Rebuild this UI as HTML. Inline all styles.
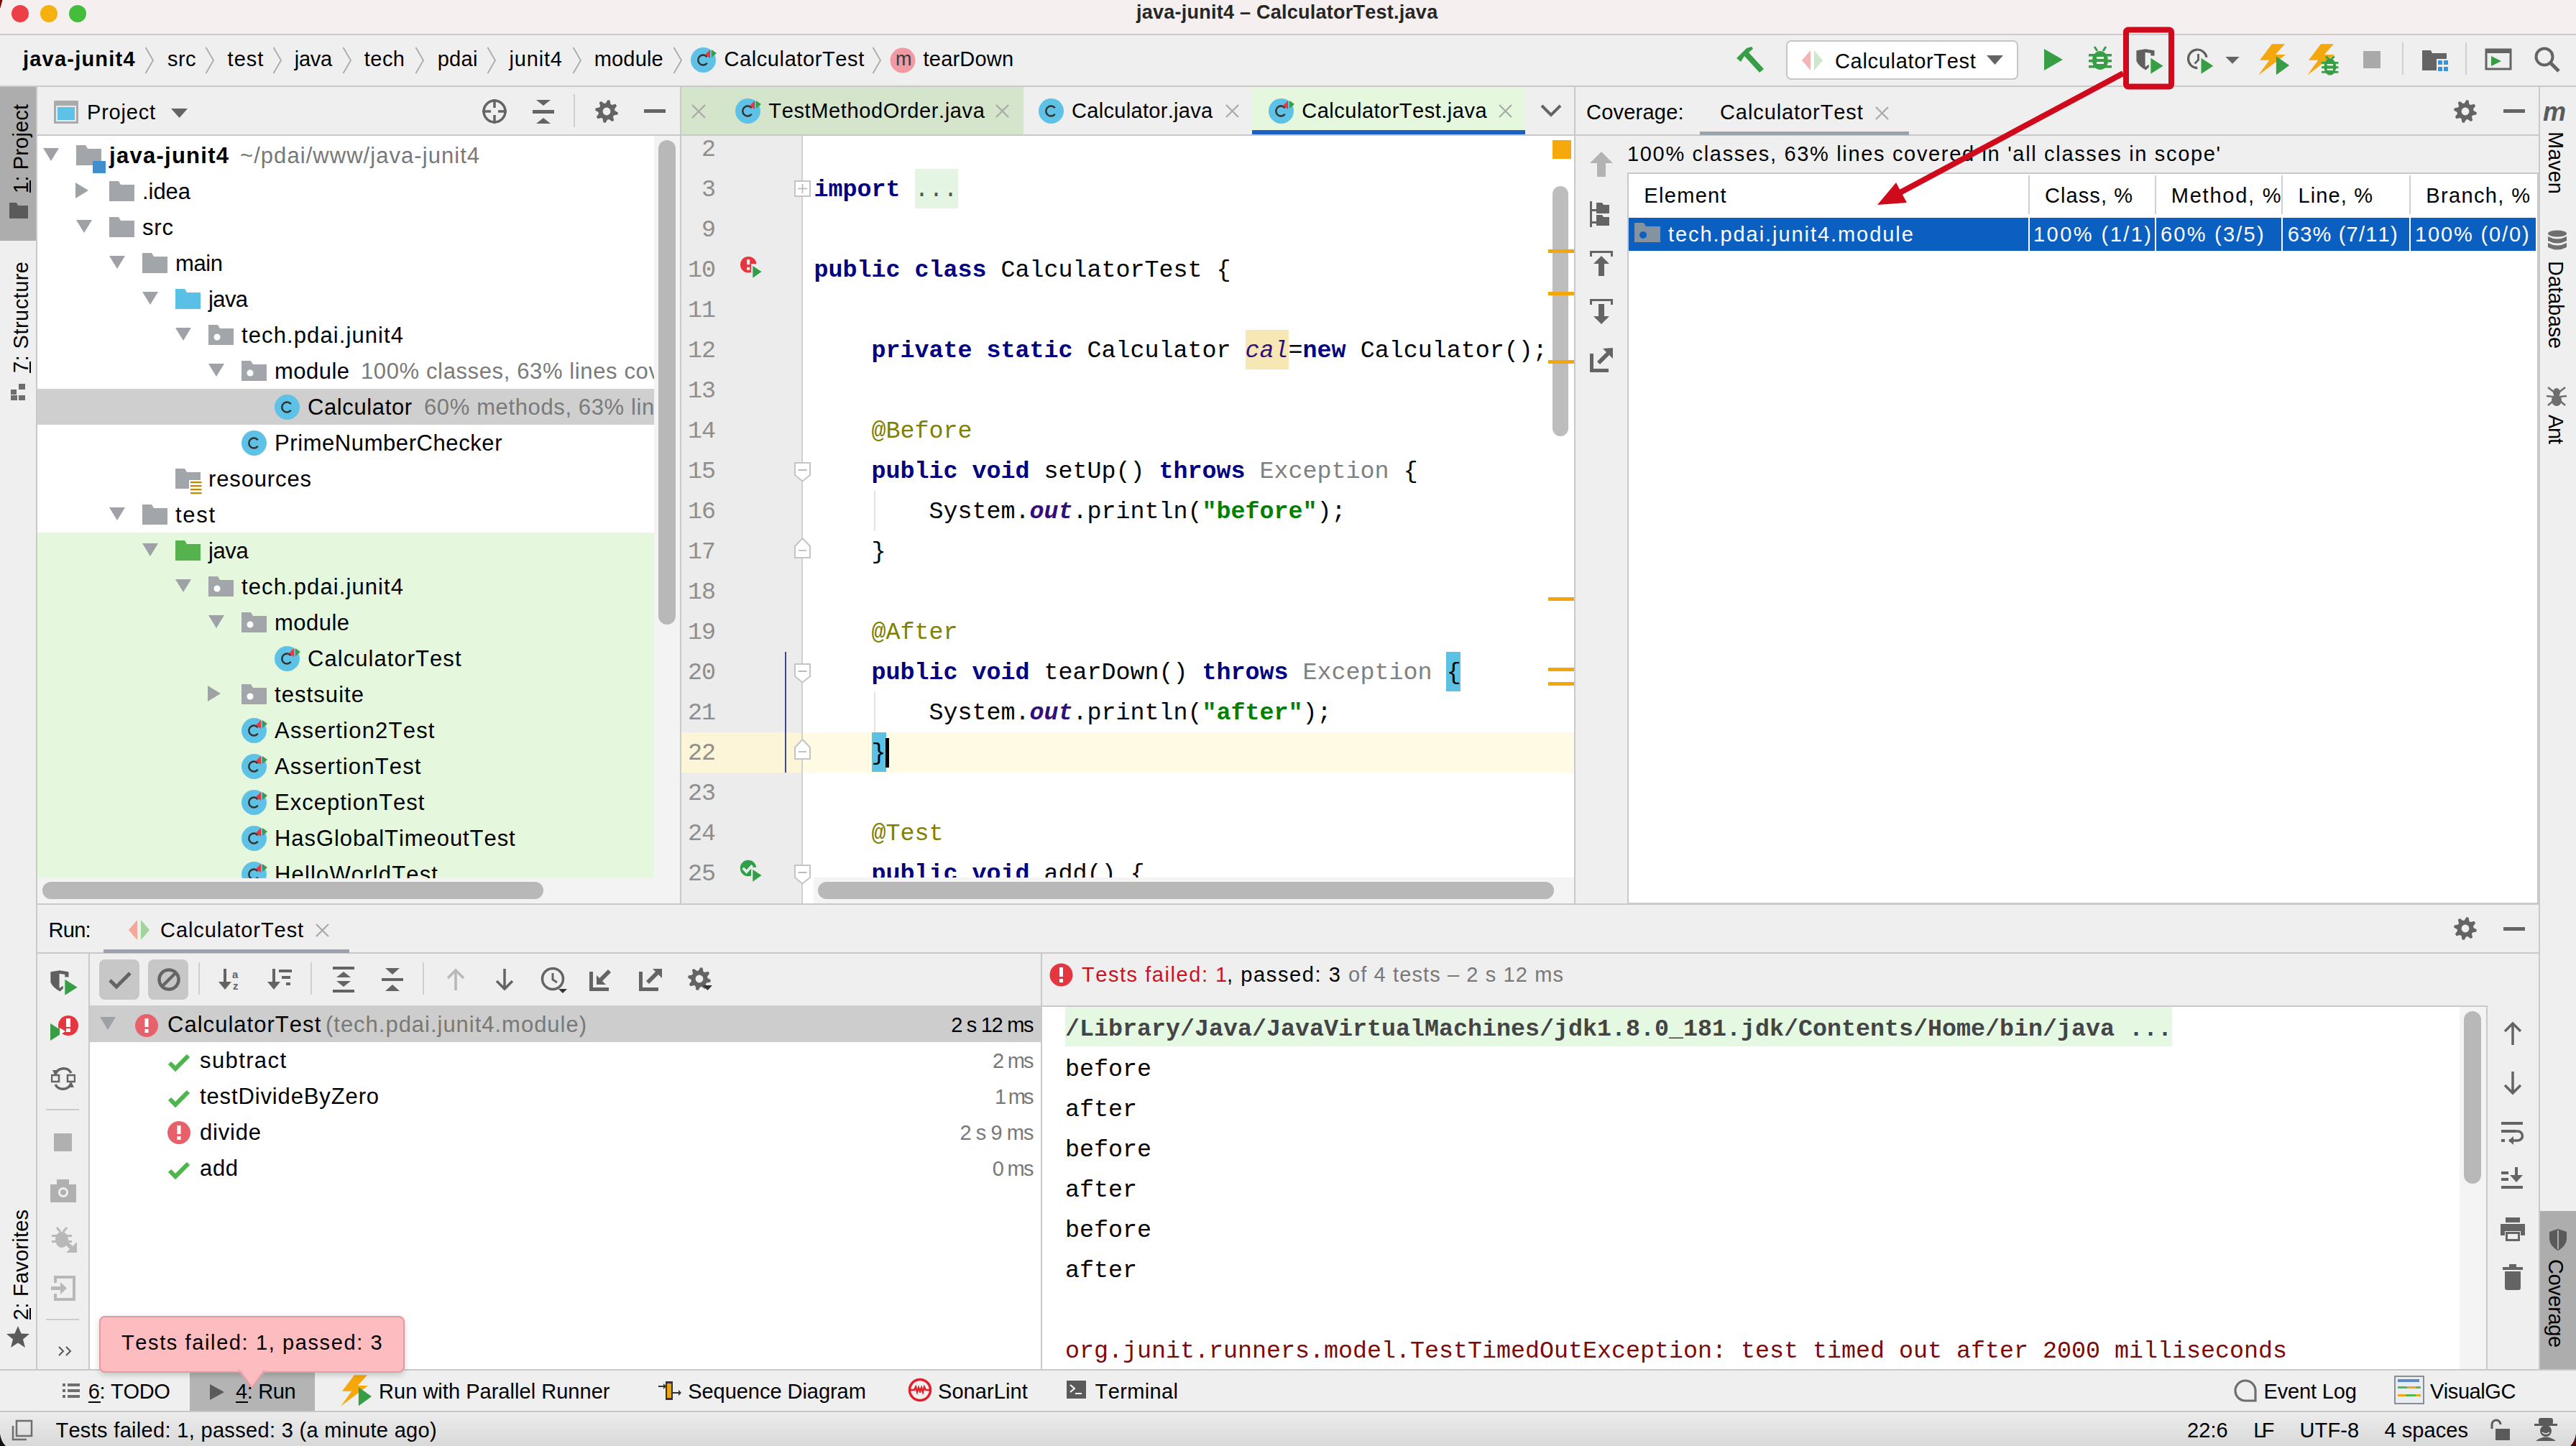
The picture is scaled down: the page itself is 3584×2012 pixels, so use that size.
<!DOCTYPE html>
<html><head><meta charset="utf-8"><title>java-junit4 – CalculatorTest.java</title>
<style>
html,body{margin:0;padding:0;}
body{width:3584px;height:2012px;position:relative;overflow:hidden;background:#efefef;}
body>div, body>svg{position:absolute;}
.t{white-space:pre;font-kerning:none;}
</style></head><body>
<div style="left:0px;top:0px;width:3584px;height:48px;background:#f5efef;"></div>
<div style="left:0px;top:47px;width:3584px;height:2px;background:#cfcaca;"></div>
<svg style="left:0px;top:0px" width="140" height="40" viewBox="0 0 140 40"><circle cx="28" cy="19" r="12" fill="#ec3f47"/><circle cx="68" cy="19" r="12" fill="#f6b00f"/><circle cx="108" cy="19" r="12" fill="#43bd3c"/></svg>
<div class="t" style="top:4.1px;font-family:'Liberation Sans', sans-serif;font-size:27px;line-height:27px;color:#262626;letter-spacing:0.25px;font-weight:700;left:1581px;">java-junit4 – CalculatorTest.java</div>
<div style="left:0px;top:49px;width:3584px;height:70px;background:#efefef;"></div>
<div style="left:0px;top:119px;width:3584px;height:2px;background:#c9c9c9;"></div>
<div class="t" style="top:68.4px;font-family:'Liberation Sans', sans-serif;font-size:29px;line-height:29px;color:#000;letter-spacing:1.21px;font-weight:700;left:32px;">java-junit4</div>
<svg style="left:201px;top:64px" width="14" height="40" viewBox="0 0 14 40"><polyline points="1.5,2 12,20 1.5,38" fill="none" stroke="#a9a9a9" stroke-width="1.8"/></svg>
<div class="t" style="top:68.4px;font-family:'Liberation Sans', sans-serif;font-size:29px;line-height:29px;color:#000;letter-spacing:0.47px;left:233px;">src</div>
<svg style="left:285px;top:64px" width="14" height="40" viewBox="0 0 14 40"><polyline points="1.5,2 12,20 1.5,38" fill="none" stroke="#a9a9a9" stroke-width="1.8"/></svg>
<div class="t" style="top:68.4px;font-family:'Liberation Sans', sans-serif;font-size:29px;line-height:29px;color:#000;letter-spacing:0.98px;left:316.6px;">test</div>
<svg style="left:379px;top:64px" width="14" height="40" viewBox="0 0 14 40"><polyline points="1.5,2 12,20 1.5,38" fill="none" stroke="#a9a9a9" stroke-width="1.8"/></svg>
<div class="t" style="top:68.4px;font-family:'Liberation Sans', sans-serif;font-size:29px;line-height:29px;color:#000;letter-spacing:-0.33px;left:409.8px;">java</div>
<svg style="left:476px;top:64px" width="14" height="40" viewBox="0 0 14 40"><polyline points="1.5,2 12,20 1.5,38" fill="none" stroke="#a9a9a9" stroke-width="1.8"/></svg>
<div class="t" style="top:68.4px;font-family:'Liberation Sans', sans-serif;font-size:29px;line-height:29px;color:#000;letter-spacing:0.46px;left:506.8px;">tech</div>
<svg style="left:577px;top:64px" width="14" height="40" viewBox="0 0 14 40"><polyline points="1.5,2 12,20 1.5,38" fill="none" stroke="#a9a9a9" stroke-width="1.8"/></svg>
<div class="t" style="top:68.4px;font-family:'Liberation Sans', sans-serif;font-size:29px;line-height:29px;color:#000;letter-spacing:0.30px;left:608.7px;">pdai</div>
<svg style="left:677px;top:64px" width="14" height="40" viewBox="0 0 14 40"><polyline points="1.5,2 12,20 1.5,38" fill="none" stroke="#a9a9a9" stroke-width="1.8"/></svg>
<div class="t" style="top:68.4px;font-family:'Liberation Sans', sans-serif;font-size:29px;line-height:29px;color:#000;letter-spacing:0.82px;left:708.5px;">junit4</div>
<svg style="left:796px;top:64px" width="14" height="40" viewBox="0 0 14 40"><polyline points="1.5,2 12,20 1.5,38" fill="none" stroke="#a9a9a9" stroke-width="1.8"/></svg>
<div class="t" style="top:68.4px;font-family:'Liberation Sans', sans-serif;font-size:29px;line-height:29px;color:#000;letter-spacing:0.18px;left:826.7px;">module</div>
<svg style="left:936px;top:64px" width="14" height="40" viewBox="0 0 14 40"><polyline points="1.5,2 12,20 1.5,38" fill="none" stroke="#a9a9a9" stroke-width="1.8"/></svg>
<svg style="left:960.7px;top:66px" width="38" height="36" viewBox="0 0 38 36"><circle cx="17.5" cy="17.5" r="17.5" fill="#5ec2e6"/><path d="M22.8,13.2 A7.0,7.0 0 1 0 22.8,21.8" fill="none" stroke="#333" stroke-width="2.5"/><polygon points="20.0,10.0 27.0,3.0 27.0,15.0" fill="#e8383d"/><polygon points="29.0,3.0 36.0,8.0 29.0,14.0" fill="#3b9c48"/></svg>
<div class="t" style="top:68.4px;font-family:'Liberation Sans', sans-serif;font-size:29px;line-height:29px;color:#000;letter-spacing:0.61px;left:1007.4px;">CalculatorTest</div>
<svg style="left:1213px;top:64px" width="14" height="40" viewBox="0 0 14 40"><polyline points="1.5,2 12,20 1.5,38" fill="none" stroke="#a9a9a9" stroke-width="1.8"/></svg>
<svg style="left:1238px;top:66px" width="36" height="36" viewBox="0 0 36 36"><circle cx="18" cy="18" r="17.5" fill="#f19aa3"/></svg>
<div class="t" style="top:69.1px;font-family:'Liberation Sans', sans-serif;font-size:27px;line-height:27px;color:#3a3a3a;letter-spacing:0.00px;left:1246px;">m</div>
<div class="t" style="top:68.4px;font-family:'Liberation Sans', sans-serif;font-size:29px;line-height:29px;color:#000;letter-spacing:0.19px;left:1284.6px;">tearDown</div>
<svg style="left:2413px;top:63px" width="44" height="40" viewBox="0 0 44 40"><g fill="#389e46"><polygon points="3,18 17,4 24,2 26,5 20,10 41,33 35,38 14,15 9,23"/></g></svg>
<div style="left:2485px;top:56px;width:319px;height:51px;background:#fff;border:2px solid #c6c6c6;border-radius:7px;box-sizing:content-box"></div>
<svg style="left:2505px;top:68px" width="34" height="32" viewBox="0 0 34 32"><polygon points="14,2 14,30 2,16" fill="#f5b5b5"/><polygon points="19,2 19,30 31,16" fill="#cfe6cc"/></svg>
<div class="t" style="top:70.9px;font-family:'Liberation Sans', sans-serif;font-size:29px;line-height:29px;color:#000;letter-spacing:0.68px;left:2553px;">CalculatorTest</div>
<svg style="left:2764px;top:77px" width="24" height="14" viewBox="0 0 24 14"><polygon points="0,0 23,0 11.5,13" fill="#646464"/></svg>
<svg style="left:2843px;top:68px" width="28" height="31" viewBox="0 0 28 31"><polygon points="1,0 27,15 1,30" fill="#389e46"/></svg>
<svg style="left:2905px;top:64px" width="34" height="35" viewBox="0 0 34 35"><g fill="#389e46"><ellipse cx="17" cy="20" rx="11" ry="13"/><rect x="1" y="11" width="32" height="3.5"/><rect x="1" y="19" width="32" height="3.5"/><rect x="1" y="27" width="32" height="3.5"/><line x1="9" y1="1" x2="13" y2="7" stroke="#389e46" stroke-width="3"/><line x1="25" y1="1" x2="21" y2="7" stroke="#389e46" stroke-width="3"/></g><rect x="12" y="15" width="10" height="3" fill="#efefef"/><rect x="12" y="22" width="10" height="3" fill="#efefef"/></svg>
<svg style="left:2970px;top:66px" width="42" height="40" viewBox="0 0 42 40"><g transform="scale(1.0)"><path d="M2.4,4.3 L15,2.2 L27.5,4.3 L27.5,11.6 L22.3,11.6 L22.3,8 L16,7 L16,26 L19.8,23.8 L19.8,27.5 L15.5,31.5 Q6,26.5 2.4,19 Z" fill="#5f5f5f"/><rect x="14.6" y="7" width="1.6" height="19.5" fill="#efefef"/><polygon points="22.3,14.7 39.6,25.7 22.3,36.8" fill="#389e46"/></g></svg>
<svg style="left:3040px;top:64px" width="80" height="42" viewBox="0 0 80 42"><path d="M17.3,30.6 A12.8,12.8 0 1 1 30.0,15.8" fill="none" stroke="#5f5f5f" stroke-width="3.2"/><path d="M18.5,11 L18.5,19.5 L13.5,24.5" fill="none" stroke="#5f5f5f" stroke-width="2.8"/><polygon points="22.5,16.7 39.3,27.8 22.5,38.8" fill="#389e46"/><polygon points="56.4,15 75.6,15 66,24.8" fill="#646464"/></svg>
<svg style="left:3140px;top:60px" width="48" height="48" viewBox="0 0 48 48"><polygon points="21,1.3 39,1.3 25.7,16 40,16 2,44.7 17.2,23.8 4,23.8" fill="#f5a80d"/><polygon points="26.9,18.3 45.1,31.1 26.9,44.3" fill="#389e46"/></svg>
<svg style="left:3208px;top:60px" width="48" height="48" viewBox="0 0 48 48"><polygon points="21,1.3 39,1.3 25.7,16 40,16 2,44.7 17.2,23.8 4,23.8" fill="#f5a80d"/><g fill="#389e46"><ellipse cx="33.8" cy="33" rx="8.5" ry="11.5"/><rect x="22" y="26" width="23.4" height="2.8"/><rect x="22" y="32.3" width="23.4" height="2.8"/><rect x="22" y="38.9" width="23.4" height="2.8"/><path d="M28,18.5 L33.8,24 L39.6,18.5" fill="none" stroke="#389e46" stroke-width="3"/></g><rect x="29.6" y="29" width="8.4" height="2.4" fill="#efefef"/><rect x="29.6" y="35.5" width="8.4" height="2.4" fill="#efefef"/></svg>
<div style="left:3288px;top:71px;width:24px;height:24px;background:#a9a9a9;"></div>
<div style="left:3342px;top:59px;width:2px;height:45px;background:#cfcfcf;"></div>
<div style="left:3430px;top:59px;width:2px;height:45px;background:#cfcfcf;"></div>
<svg style="left:3370px;top:68px" width="37" height="36" viewBox="0 0 37 36"><path d="M0,2 L12,2 L14,6 L34,6 L34,14 L20,14 L20,30 L0,30 Z" fill="#646464"/><g fill="#3d93d1"><rect x="22" y="16" width="6" height="6"/><rect x="30" y="16" width="6" height="6"/><rect x="22" y="25" width="6" height="6"/><rect x="30" y="25" width="6" height="6"/></g></svg>
<svg style="left:3457px;top:67px" width="38" height="31" viewBox="0 0 38 31"><rect x="2" y="2" width="34" height="27" fill="none" stroke="#646464" stroke-width="3"/><rect x="2" y="2" width="34" height="5" fill="#646464"/><polygon points="9,11 23,18 9,25" fill="#389e46"/></svg>
<svg style="left:3525px;top:64px" width="40" height="40" viewBox="0 0 40 40"><circle cx="15" cy="15" r="11.5" fill="none" stroke="#646464" stroke-width="4"/><line x1="23" y1="23" x2="35" y2="35" stroke="#646464" stroke-width="5"/></svg>
<div style="left:0px;top:121px;width:50px;height:1785px;background:#efefef;"></div>
<div style="left:50px;top:121px;width:2px;height:1785px;background:#c9c9c9;"></div>
<div style="left:0px;top:121px;width:50px;height:214px;background:#adadad;"></div>
<div class="t" style="left:14.9px;top:269.0px;font-family:'Liberation Sans',sans-serif;font-size:29px;line-height:29px;letter-spacing:0.17px;color:#000;transform-origin:0 0;transform:rotate(-90deg) translate(0,0)">1: Project</div>
<div style="left:41px;top:251px;width:2px;height:17px;background:#000;"></div>
<svg style="left:12px;top:281px" width="28" height="24" viewBox="0 0 28 24"><path d="M1,1 L11,1 L13,5 L27,5 L27,23 L1,23 Z" fill="#5a5a5a"/></svg>
<div class="t" style="left:14.9px;top:519.0px;font-family:'Liberation Sans',sans-serif;font-size:29px;line-height:29px;letter-spacing:0.46px;color:#000;transform-origin:0 0;transform:rotate(-90deg) translate(0,0)">7: Structure</div>
<div style="left:41px;top:503px;width:2px;height:16px;background:#000;"></div>
<svg style="left:14px;top:533px" width="24" height="24" viewBox="0 0 24 24"><g fill="#6e6e6e"><rect x="1" y="9" width="8" height="7"/><rect x="12" y="1" width="9" height="8"/><rect x="1" y="17" width="9" height="7"/><rect x="12" y="17" width="9" height="7"/></g></svg>
<div class="t" style="left:14.9px;top:1836.5px;font-family:'Liberation Sans',sans-serif;font-size:29px;line-height:29px;letter-spacing:0.23px;color:#000;transform-origin:0 0;transform:rotate(-90deg) translate(0,0)">2: Favorites</div>
<div style="left:41px;top:1820px;width:2px;height:16px;background:#000;"></div>
<svg style="left:9px;top:1844px" width="34" height="32" viewBox="0 0 34 32"><polygon points="16,1 20.5,11.5 32,12 23,19.5 26,31 16,24.5 6,31 9,19.5 0,12 11.5,11.5" fill="#5a5a5a"/></svg>
<div style="left:3534px;top:121px;width:50px;height:1785px;background:#efefef;"></div>
<div style="left:3532px;top:121px;width:2px;height:1785px;background:#c9c9c9;"></div>
<div style="left:3534px;top:1685px;width:50px;height:220px;background:#adadad;"></div>
<div class="t" style="top:138.0px;font-family:'Liberation Sans', sans-serif;font-size:36px;line-height:36px;color:#5a5a5a;letter-spacing:0.00px;font-weight:700;font-style:italic;left:3538px;">m</div>
<div class="t" style="left:3570.1px;top:183.0px;font-family:'Liberation Sans',sans-serif;font-size:29px;line-height:29px;letter-spacing:-0.01px;color:#000;transform-origin:0 0;transform:rotate(90deg)">Maven</div>
<svg style="left:3543px;top:320px" width="30" height="32" viewBox="0 0 30 32"><g fill="#6e6e6e"><ellipse cx="15" cy="5" rx="13" ry="4.5"/><path d="M2,9 Q15,16 28,9 L28,15 Q15,22 2,15 Z"/><path d="M2,18 Q15,25 28,18 L28,24 Q15,31 2,24 Z"/></g></svg>
<div class="t" style="left:3570.1px;top:363.0px;font-family:'Liberation Sans',sans-serif;font-size:29px;line-height:29px;letter-spacing:-0.30px;color:#000;transform-origin:0 0;transform:rotate(90deg)">Database</div>
<svg style="left:3542px;top:536px" width="30" height="30" viewBox="0 0 30 30"><g fill="#6e6e6e"><ellipse cx="15" cy="10" rx="5" ry="6"/><ellipse cx="15" cy="21" rx="7" ry="8"/><path d="M3,3 L12,10 M27,3 L18,10 M1,15 L10,16 M29,15 L20,16 M3,28 L10,22 M27,28 L20,22" stroke="#6e6e6e" stroke-width="2.5"/></g></svg>
<div class="t" style="left:3570.1px;top:577.0px;font-family:'Liberation Sans',sans-serif;font-size:29px;line-height:29px;letter-spacing:-1.27px;color:#000;transform-origin:0 0;transform:rotate(90deg)">Ant</div>
<svg style="left:3545px;top:1709px" width="28" height="32" viewBox="0 0 28 32"><path d="M2,5 L14,1 L26,5 L26,14 C26,22 20,28 14,31 C8,28 2,22 2,14 Z" fill="#5a5a5a"/><path d="M14,3 L14,29" stroke="#adadad" stroke-width="2"/></svg>
<div class="t" style="left:3570.1px;top:1752.0px;font-family:'Liberation Sans',sans-serif;font-size:29px;line-height:29px;letter-spacing:-0.39px;color:#000;transform-origin:0 0;transform:rotate(90deg)">Coverage</div>
<div style="left:0px;top:1905px;width:3584px;height:2px;background:#c9c9c9;"></div>
<div style="left:0px;top:1907px;width:3584px;height:56px;background:#efefef;"></div>
<div style="left:264px;top:1907px;width:174px;height:56px;background:#b4b4b4;"></div>
<svg style="left:86px;top:1924px" width="26" height="22" viewBox="0 0 26 22"><g fill="#6e6e6e"><rect x="1" y="1" width="4" height="4"/><rect x="8" y="1" width="17" height="4"/><rect x="1" y="9" width="4" height="4"/><rect x="8" y="9" width="17" height="4"/><rect x="1" y="17" width="4" height="4"/><rect x="8" y="17" width="17" height="4"/></g></svg>
<div class="t" style="top:1921.9px;font-family:'Liberation Sans', sans-serif;font-size:29px;line-height:29px;color:#000;letter-spacing:-0.33px;left:122.8px;">6: TODO</div>
<div style="left:123px;top:1950px;width:17px;height:2px;background:#000;"></div>
<svg style="left:291px;top:1925px" width="22" height="24" viewBox="0 0 22 24"><polygon points="1,1 21,12 1,23" fill="#5a5a5a"/></svg>
<div class="t" style="top:1921.9px;font-family:'Liberation Sans', sans-serif;font-size:29px;line-height:29px;color:#000;letter-spacing:-0.35px;left:328px;">4: Run</div>
<div style="left:328px;top:1950px;width:17px;height:2px;background:#000;"></div>
<svg style="left:472px;top:1912px" width="48" height="48" viewBox="0 0 48 48"><polygon points="21,1.3 39,1.3 25.7,16 40,16 2,44.7 17.2,23.8 4,23.8" fill="#f5a80d"/><polygon points="26.9,18.3 45.1,31.1 26.9,44.3" fill="#389e46"/></svg>
<div class="t" style="top:1921.9px;font-family:'Liberation Sans', sans-serif;font-size:29px;line-height:29px;color:#000;letter-spacing:0.03px;left:527px;">Run with Parallel Runner</div>
<svg style="left:915px;top:1920px" width="34" height="30" viewBox="0 0 34 30"><path d="M1,9 L9,9" stroke="#333" stroke-width="2"/><polygon points="8,5 12,9 8,13" fill="#333"/><rect x="11" y="2" width="10" height="26" fill="#333"/><rect x="13" y="5" width="6" height="20" fill="#f0a30a"/><path d="M21,18 L30,18" stroke="#333" stroke-width="2"/><polygon points="29,14 33,18 29,22" fill="#333"/></svg>
<div class="t" style="top:1921.9px;font-family:'Liberation Sans', sans-serif;font-size:29px;line-height:29px;color:#000;letter-spacing:-0.04px;left:957.2px;">Sequence Diagram</div>
<svg style="left:1263px;top:1917px" width="34" height="34" viewBox="0 0 34 34"><circle cx="17" cy="17" r="14.5" fill="none" stroke="#e0202a" stroke-width="3.5"/><path d="M3,17 L9,17 L11,13 L13,20 L15,14 L17,19 L19,14 L21,20 L23,13 L25,17 L31,17" fill="none" stroke="#e0202a" stroke-width="2.5"/></svg>
<div class="t" style="top:1921.9px;font-family:'Liberation Sans', sans-serif;font-size:29px;line-height:29px;color:#000;letter-spacing:0.07px;left:1305px;">SonarLint</div>
<svg style="left:1484px;top:1921px" width="28" height="26" viewBox="0 0 28 26"><rect x="0" y="0" width="27" height="25" fill="#5a5a5a"/><path d="M5,6 L11,11 L5,16" fill="none" stroke="#fff" stroke-width="2"/><rect x="12" y="17" width="9" height="2" fill="#fff"/></svg>
<div class="t" style="top:1921.9px;font-family:'Liberation Sans', sans-serif;font-size:29px;line-height:29px;color:#000;letter-spacing:0.35px;left:1523.6px;">Terminal</div>
<svg style="left:3107px;top:1918px" width="34" height="34" viewBox="0 0 34 34"><path d="M31,17 L31,31 L17,31 A14,14 0 1 1 31,17 Z" fill="none" stroke="#6e6e6e" stroke-width="3.2"/></svg>
<div class="t" style="top:1922.4px;font-family:'Liberation Sans', sans-serif;font-size:29px;line-height:29px;color:#000;letter-spacing:-0.17px;left:3149.6px;">Event Log</div>
<svg style="left:3331px;top:1914px" width="42" height="40" viewBox="0 0 42 40"><rect x="1" y="1" width="40" height="38" fill="#e9edf2" stroke="#8a8f96" stroke-width="2"/><rect x="5" y="5" width="30" height="4" fill="#5e8ac7"/><rect x="5" y="15" width="32" height="3" fill="#4dbb4d"/><rect x="18" y="15" width="12" height="3" fill="#f3a51b"/><rect x="5" y="26" width="32" height="3" fill="#f3a51b"/><rect x="16" y="26" width="14" height="3" fill="#4dbb4d"/></svg>
<div class="t" style="top:1922.4px;font-family:'Liberation Sans', sans-serif;font-size:29px;line-height:29px;color:#000;letter-spacing:-0.42px;left:3380.9px;">VisualGC</div>
<div style="left:0px;top:1963px;width:3584px;height:2px;background:#c6c6c6;"></div>
<div style="left:0;top:1965px;width:3584px;height:47px;background:linear-gradient(#ececec,#d9d9d9)"></div>
<svg style="left:14px;top:1975px" width="32" height="32" viewBox="0 0 32 32"><rect x="9" y="2" width="21" height="21" fill="none" stroke="#6e6e6e" stroke-width="2.5"/><path d="M4,9 L4,28 L23,28" fill="none" stroke="#6e6e6e" stroke-width="2.5"/></svg>
<div class="t" style="top:1975.9px;font-family:'Liberation Sans', sans-serif;font-size:29px;line-height:29px;color:#000;letter-spacing:0.32px;left:77.4px;">Tests failed: 1, passed: 3 (a minute ago)</div>
<div class="t" style="top:1975.6px;font-family:'Liberation Sans', sans-serif;font-size:29px;line-height:29px;color:#000;letter-spacing:0.09px;left:3043px;">22:6</div>
<div class="t" style="top:1975.6px;font-family:'Liberation Sans', sans-serif;font-size:29px;line-height:29px;color:#000;letter-spacing:-4.74px;left:3135.3px;">LF</div>
<div class="t" style="top:1975.6px;font-family:'Liberation Sans', sans-serif;font-size:29px;line-height:29px;color:#000;letter-spacing:0.14px;left:3199.5px;">UTF-8</div>
<div class="t" style="top:1975.6px;font-family:'Liberation Sans', sans-serif;font-size:29px;line-height:29px;color:#000;letter-spacing:0.09px;left:3317.4px;">4 spaces</div>
<svg style="left:3462px;top:1974px" width="32" height="31" viewBox="0 0 32 31"><path d="M5,14 L5,8 A6,6 0 0 1 17,8" fill="none" stroke="#5a5a5a" stroke-width="3"/><rect x="10" y="14" width="20" height="16" fill="#5a5a5a"/></svg>
<svg style="left:3525px;top:1972px" width="34" height="34" viewBox="0 0 34 34"><g fill="#5a5a5a"><rect x="7" y="1" width="20" height="9" rx="3"/><rect x="1" y="9" width="32" height="3"/><circle cx="17" cy="19" r="8"/><path d="M3,33 Q17,22 31,33 Z"/></g><path d="M12,21 Q17,25 22,21" stroke="#e8e8e8" stroke-width="1.5" fill="none"/></svg>
<div style="left:52px;top:121px;width:894px;height:66px;background:#efefef;"></div>
<div style="left:52px;top:187px;width:894px;height:2px;background:#c9c9c9;"></div>
<div style="left:946px;top:121px;width:2px;height:1137px;background:#c9c9c9;"></div>
<div style="left:52px;top:189px;width:894px;height:1069px;background:#ffffff;"></div>
<svg style="left:74px;top:139px" width="36" height="34" viewBox="0 0 36 34"><rect x="1" y="1" width="34" height="32" fill="#ababab"/><rect x="4" y="8" width="28" height="22" fill="#e9e9e9"/><rect x="6" y="10" width="24" height="18" fill="#5dc2e6"/></svg>
<div class="t" style="top:142.4px;font-family:'Liberation Sans', sans-serif;font-size:29px;line-height:29px;color:#000;letter-spacing:0.79px;left:121px;">Project</div>
<svg style="left:238px;top:151px" width="24" height="14" viewBox="0 0 24 14"><polygon points="0,0 23,0 11.5,13" fill="#646464"/></svg>
<svg style="left:670px;top:137px" width="36" height="36" viewBox="0 0 36 36"><circle cx="18" cy="18" r="15" fill="none" stroke="#646464" stroke-width="3.5"/><g stroke="#646464" stroke-width="3.5"><line x1="18" y1="1" x2="18" y2="13"/><line x1="18" y1="23" x2="18" y2="35"/><line x1="1" y1="18" x2="13" y2="18"/><line x1="23" y1="18" x2="35" y2="18"/></g></svg>
<svg style="left:740px;top:138px" width="32" height="35" viewBox="0 0 32 35"><g fill="#646464"><polygon points="6,1 26,1 16,9"/><rect x="1" y="15" width="30" height="5"/><polygon points="6,34 26,34 16,26"/></g></svg>
<div style="left:798px;top:131px;width:2px;height:46px;background:#cfcfcf;"></div>
<svg style="left:828px;top:139px" width="32" height="32" viewBox="0 0 32 32"><polygon points="14.9,4.5 17.6,0.1 20.6,0.7 21.4,5.8 23.3,7.1 28.4,5.8 30.1,8.5 27.0,12.7 27.5,14.9 31.9,17.6 31.3,20.6 26.2,21.4 24.9,23.3 26.2,28.4 23.5,30.1 19.3,27.0 17.1,27.5 14.4,31.9 11.4,31.3 10.6,26.2 8.7,24.9 3.6,26.2 1.9,23.5 5.0,19.3 4.5,17.1 0.1,14.4 0.7,11.4 5.8,10.6 7.1,8.7 5.8,3.6 8.5,1.9 12.7,5.0" fill="#646464"/><circle cx="16.0" cy="16.0" r="5.4" fill="#efefef"/></svg>
<div style="left:896px;top:152px;width:30px;height:5px;background:#646464;"></div>
<div style="left:52px;top:741px;width:858px;height:481px;background:#e5f8de;"></div>
<div style="left:52px;top:541px;width:858px;height:50px;background:#cfcfcf;"></div>
<svg style="left:59px;top:205px" width="24" height="20" viewBox="0 0 24 20"><polygon points="1,1 23,1 12,19" fill="#9ea1a6"/></svg>
<svg style="left:106px;top:202px" width="35" height="28" viewBox="0 0 35 28"><path d="M0,0 L13,0 L16,5 L35,5 L35,28 L0,28 Z" fill="#a2a5aa"/></svg>
<div style="left:129px;top:224px;width:18px;height:17px;background:#3f8fd0;"></div>
<div class="t" style="top:200.7px;font-family:'Liberation Sans', sans-serif;font-size:31px;line-height:31px;color:#000;letter-spacing:1.27px;font-weight:700;left:152px;">java-junit4</div>
<div class="t" style="top:200.7px;font-family:'Liberation Sans', sans-serif;font-size:31px;line-height:31px;color:#787878;letter-spacing:1.05px;left:334px;">~/pdai/www/java-junit4</div>
<svg style="left:104px;top:253px" width="20" height="24" viewBox="0 0 20 24"><polygon points="1,1 19,12 1,23" fill="#9ea1a6"/></svg>
<svg style="left:152px;top:252px" width="35" height="28" viewBox="0 0 35 28"><path d="M0,0 L13,0 L16,5 L35,5 L35,28 L0,28 Z" fill="#a2a5aa"/></svg>
<div class="t" style="top:250.7px;font-family:'Liberation Sans', sans-serif;font-size:31px;line-height:31px;color:#000;letter-spacing:-0.05px;left:198px;">.idea</div>
<svg style="left:105px;top:305px" width="24" height="20" viewBox="0 0 24 20"><polygon points="1,1 23,1 12,19" fill="#9ea1a6"/></svg>
<svg style="left:152px;top:302px" width="35" height="28" viewBox="0 0 35 28"><path d="M0,0 L13,0 L16,5 L35,5 L35,28 L0,28 Z" fill="#a2a5aa"/></svg>
<div class="t" style="top:300.7px;font-family:'Liberation Sans', sans-serif;font-size:31px;line-height:31px;color:#000;letter-spacing:0.84px;left:198px;">src</div>
<svg style="left:151px;top:355px" width="24" height="20" viewBox="0 0 24 20"><polygon points="1,1 23,1 12,19" fill="#9ea1a6"/></svg>
<svg style="left:198px;top:352px" width="35" height="28" viewBox="0 0 35 28"><path d="M0,0 L13,0 L16,5 L35,5 L35,28 L0,28 Z" fill="#a2a5aa"/></svg>
<div class="t" style="top:350.7px;font-family:'Liberation Sans', sans-serif;font-size:31px;line-height:31px;color:#000;letter-spacing:-0.40px;left:244px;">main</div>
<svg style="left:197px;top:405px" width="24" height="20" viewBox="0 0 24 20"><polygon points="1,1 23,1 12,19" fill="#9ea1a6"/></svg>
<svg style="left:244px;top:402px" width="35" height="28" viewBox="0 0 35 28"><path d="M0,0 L13,0 L16,5 L35,5 L35,28 L0,28 Z" fill="#5bc0e6"/></svg>
<div class="t" style="top:400.7px;font-family:'Liberation Sans', sans-serif;font-size:31px;line-height:31px;color:#000;letter-spacing:-0.62px;left:290px;">java</div>
<svg style="left:243px;top:455px" width="24" height="20" viewBox="0 0 24 20"><polygon points="1,1 23,1 12,19" fill="#9ea1a6"/></svg>
<svg style="left:290px;top:452px" width="35" height="28" viewBox="0 0 35 28"><path d="M0,0 L13,0 L16,5 L35,5 L35,28 L0,28 Z" fill="#a2a5aa"/><circle cx="12" cy="17" r="4.5" fill="#fff"/></svg>
<div class="t" style="top:450.7px;font-family:'Liberation Sans', sans-serif;font-size:31px;line-height:31px;color:#000;letter-spacing:1.10px;left:336px;">tech.pdai.junit4</div>
<svg style="left:289px;top:505px" width="24" height="20" viewBox="0 0 24 20"><polygon points="1,1 23,1 12,19" fill="#9ea1a6"/></svg>
<svg style="left:336px;top:502px" width="35" height="28" viewBox="0 0 35 28"><path d="M0,0 L13,0 L16,5 L35,5 L35,28 L0,28 Z" fill="#a2a5aa"/><circle cx="12" cy="17" r="4.5" fill="#fff"/></svg>
<div class="t" style="top:500.7px;font-family:'Liberation Sans', sans-serif;font-size:31px;line-height:31px;color:#000;letter-spacing:0.47px;left:382px;">module</div>
<svg style="left:382px;top:549px" width="38" height="36" viewBox="0 0 38 36"><circle cx="17.5" cy="17.5" r="17.5" fill="#5ec2e6"/><path d="M22.8,13.2 A7.0,7.0 0 1 0 22.8,21.8" fill="none" stroke="#333" stroke-width="2.5"/></svg>
<div class="t" style="top:550.7px;font-family:'Liberation Sans', sans-serif;font-size:31px;line-height:31px;color:#000;letter-spacing:0.61px;left:428px;">Calculator</div>
<svg style="left:336px;top:599px" width="38" height="36" viewBox="0 0 38 36"><circle cx="17.5" cy="17.5" r="17.5" fill="#5ec2e6"/><path d="M22.8,13.2 A7.0,7.0 0 1 0 22.8,21.8" fill="none" stroke="#333" stroke-width="2.5"/></svg>
<div class="t" style="top:600.7px;font-family:'Liberation Sans', sans-serif;font-size:31px;line-height:31px;color:#000;letter-spacing:0.58px;left:382px;">PrimeNumberChecker</div>
<svg style="left:244px;top:652px" width="35" height="28" viewBox="0 0 35 28"><path d="M0,0 L13,0 L16,5 L35,5 L35,28 L0,28 Z" fill="#a2a5aa"/></svg>
<div style="left:263px;top:668px;width:19px;height:21px;background:#ffffff;"></div>
<svg style="left:265px;top:669px" width="16" height="20" viewBox="0 0 16 20"><g fill="#bf8c00"><rect x="0" y="1" width="15.5" height="2.3"/><rect x="0" y="6" width="15.5" height="2.3"/><rect x="0" y="11" width="15.5" height="2.3"/><rect x="0" y="16" width="15.5" height="2.3"/></g></svg>
<div class="t" style="top:650.7px;font-family:'Liberation Sans', sans-serif;font-size:31px;line-height:31px;color:#000;letter-spacing:0.86px;left:290px;">resources</div>
<svg style="left:151px;top:705px" width="24" height="20" viewBox="0 0 24 20"><polygon points="1,1 23,1 12,19" fill="#9ea1a6"/></svg>
<svg style="left:198px;top:702px" width="35" height="28" viewBox="0 0 35 28"><path d="M0,0 L13,0 L16,5 L35,5 L35,28 L0,28 Z" fill="#a2a5aa"/></svg>
<div class="t" style="top:700.7px;font-family:'Liberation Sans', sans-serif;font-size:31px;line-height:31px;color:#000;letter-spacing:1.68px;left:244px;">test</div>
<svg style="left:197px;top:755px" width="24" height="20" viewBox="0 0 24 20"><polygon points="1,1 23,1 12,19" fill="#9ea1a6"/></svg>
<svg style="left:244px;top:752px" width="35" height="28" viewBox="0 0 35 28"><path d="M0,0 L13,0 L16,5 L35,5 L35,28 L0,28 Z" fill="#55b34d"/></svg>
<div class="t" style="top:750.7px;font-family:'Liberation Sans', sans-serif;font-size:31px;line-height:31px;color:#000;letter-spacing:-0.39px;left:290px;">java</div>
<svg style="left:243px;top:805px" width="24" height="20" viewBox="0 0 24 20"><polygon points="1,1 23,1 12,19" fill="#9ea1a6"/></svg>
<svg style="left:290px;top:802px" width="35" height="28" viewBox="0 0 35 28"><path d="M0,0 L13,0 L16,5 L35,5 L35,28 L0,28 Z" fill="#a2a5aa"/><circle cx="12" cy="17" r="4.5" fill="#fff"/></svg>
<div class="t" style="top:800.7px;font-family:'Liberation Sans', sans-serif;font-size:31px;line-height:31px;color:#000;letter-spacing:1.10px;left:336px;">tech.pdai.junit4</div>
<svg style="left:289px;top:855px" width="24" height="20" viewBox="0 0 24 20"><polygon points="1,1 23,1 12,19" fill="#9ea1a6"/></svg>
<svg style="left:336px;top:852px" width="35" height="28" viewBox="0 0 35 28"><path d="M0,0 L13,0 L16,5 L35,5 L35,28 L0,28 Z" fill="#a2a5aa"/><circle cx="12" cy="17" r="4.5" fill="#fff"/></svg>
<div class="t" style="top:850.7px;font-family:'Liberation Sans', sans-serif;font-size:31px;line-height:31px;color:#000;letter-spacing:0.47px;left:382px;">module</div>
<svg style="left:382px;top:899px" width="38" height="36" viewBox="0 0 38 36"><circle cx="17.5" cy="17.5" r="17.5" fill="#5ec2e6"/><path d="M22.8,13.2 A7.0,7.0 0 1 0 22.8,21.8" fill="none" stroke="#333" stroke-width="2.5"/><polygon points="20.0,10.0 27.0,3.0 27.0,15.0" fill="#e8383d"/><polygon points="29.0,3.0 36.0,8.0 29.0,14.0" fill="#3b9c48"/></svg>
<div class="t" style="top:900.7px;font-family:'Liberation Sans', sans-serif;font-size:31px;line-height:31px;color:#000;letter-spacing:1.05px;left:428px;">CalculatorTest</div>
<svg style="left:288px;top:953px" width="20" height="24" viewBox="0 0 20 24"><polygon points="1,1 19,12 1,23" fill="#9ea1a6"/></svg>
<svg style="left:336px;top:952px" width="35" height="28" viewBox="0 0 35 28"><path d="M0,0 L13,0 L16,5 L35,5 L35,28 L0,28 Z" fill="#a2a5aa"/><circle cx="12" cy="17" r="4.5" fill="#fff"/></svg>
<div class="t" style="top:950.7px;font-family:'Liberation Sans', sans-serif;font-size:31px;line-height:31px;color:#000;letter-spacing:1.07px;left:382px;">testsuite</div>
<svg style="left:336px;top:999px" width="38" height="36" viewBox="0 0 38 36"><circle cx="17.5" cy="17.5" r="17.5" fill="#5ec2e6"/><path d="M22.8,13.2 A7.0,7.0 0 1 0 22.8,21.8" fill="none" stroke="#333" stroke-width="2.5"/><polygon points="20.0,10.0 27.0,3.0 27.0,15.0" fill="#e8383d"/><polygon points="29.0,3.0 36.0,8.0 29.0,14.0" fill="#3b9c48"/></svg>
<div class="t" style="top:1000.7px;font-family:'Liberation Sans', sans-serif;font-size:31px;line-height:31px;color:#000;letter-spacing:1.21px;left:382px;">Assertion2Test</div>
<svg style="left:336px;top:1049px" width="38" height="36" viewBox="0 0 38 36"><circle cx="17.5" cy="17.5" r="17.5" fill="#5ec2e6"/><path d="M22.8,13.2 A7.0,7.0 0 1 0 22.8,21.8" fill="none" stroke="#333" stroke-width="2.5"/><polygon points="20.0,10.0 27.0,3.0 27.0,15.0" fill="#e8383d"/><polygon points="29.0,3.0 36.0,8.0 29.0,14.0" fill="#3b9c48"/></svg>
<div class="t" style="top:1050.7px;font-family:'Liberation Sans', sans-serif;font-size:31px;line-height:31px;color:#000;letter-spacing:1.16px;left:382px;">AssertionTest</div>
<svg style="left:336px;top:1099px" width="38" height="36" viewBox="0 0 38 36"><circle cx="17.5" cy="17.5" r="17.5" fill="#5ec2e6"/><path d="M22.8,13.2 A7.0,7.0 0 1 0 22.8,21.8" fill="none" stroke="#333" stroke-width="2.5"/><polygon points="20.0,10.0 27.0,3.0 27.0,15.0" fill="#e8383d"/><polygon points="29.0,3.0 36.0,8.0 29.0,14.0" fill="#3b9c48"/></svg>
<div class="t" style="top:1100.7px;font-family:'Liberation Sans', sans-serif;font-size:31px;line-height:31px;color:#000;letter-spacing:1.00px;left:382px;">ExceptionTest</div>
<svg style="left:336px;top:1149px" width="38" height="36" viewBox="0 0 38 36"><circle cx="17.5" cy="17.5" r="17.5" fill="#5ec2e6"/><path d="M22.8,13.2 A7.0,7.0 0 1 0 22.8,21.8" fill="none" stroke="#333" stroke-width="2.5"/><polygon points="20.0,10.0 27.0,3.0 27.0,15.0" fill="#e8383d"/><polygon points="29.0,3.0 36.0,8.0 29.0,14.0" fill="#3b9c48"/></svg>
<div class="t" style="top:1150.7px;font-family:'Liberation Sans', sans-serif;font-size:31px;line-height:31px;color:#000;letter-spacing:0.93px;left:382px;">HasGlobalTimeoutTest</div>
<svg style="left:336px;top:1199px" width="38" height="36" viewBox="0 0 38 36"><circle cx="17.5" cy="17.5" r="17.5" fill="#5ec2e6"/><path d="M22.8,13.2 A7.0,7.0 0 1 0 22.8,21.8" fill="none" stroke="#333" stroke-width="2.5"/><polygon points="20.0,10.0 27.0,3.0 27.0,15.0" fill="#e8383d"/><polygon points="29.0,3.0 36.0,8.0 29.0,14.0" fill="#3b9c48"/></svg>
<div class="t" style="top:1200.7px;font-family:'Liberation Sans', sans-serif;font-size:31px;line-height:31px;color:#000;letter-spacing:1.16px;left:382px;">HelloWorldTest</div>
<div class="t" style="top:500.7px;font-family:'Liberation Sans', sans-serif;font-size:31px;line-height:31px;color:#7a7a7a;letter-spacing:0.62px;left:502px;">100% classes, 63% lines covered</div>
<div class="t" style="top:550.7px;font-family:'Liberation Sans', sans-serif;font-size:31px;line-height:31px;color:#7a7a7a;letter-spacing:0.62px;left:590px;">60% methods, 63% lines covered</div>
<div style="left:910px;top:189px;width:36px;height:1033px;background:#f3f3f3;"></div>
<div style="left:916px;top:195px;width:24px;height:674px;background:#b8b8b8;border-radius:12px"></div>
<div style="left:52px;top:1222px;width:894px;height:36px;background:#f3f3f3;"></div>
<div style="left:59px;top:1227px;width:697px;height:24px;background:#b8b8b8;border-radius:12px"></div>
<div style="left:946px;top:121px;width:2px;height:1137px;background:#c9c9c9;"></div>
<div style="left:948px;top:121px;width:1242px;height:66px;background:#efefef;"></div>
<div style="left:948px;top:121px;width:476px;height:66px;background:#d5e5cc;"></div>
<div style="left:1742px;top:121px;width:380px;height:66px;background:#e5f7dd;"></div>
<div style="left:1742px;top:181px;width:380px;height:7px;background:#1d5fc4;"></div>
<div style="left:948px;top:187px;width:1242px;height:2px;background:#c9c9c9;"></div>
<svg style="left:962px;top:145px" width="20" height="20" viewBox="0 0 20 20"><path d="M1,1 L19,19 M19,1 L1,19" stroke="#a9a9a9" stroke-width="2.2"/></svg>
<svg style="left:1022.7px;top:137px" width="38" height="36" viewBox="0 0 38 36"><circle cx="17.5" cy="17.5" r="17.5" fill="#5ec2e6"/><path d="M22.8,13.2 A7.0,7.0 0 1 0 22.8,21.8" fill="none" stroke="#333" stroke-width="2.5"/><polygon points="20.0,10.0 27.0,3.0 27.0,15.0" fill="#e8383d"/><polygon points="29.0,3.0 36.0,8.0 29.0,14.0" fill="#3b9c48"/></svg>
<div class="t" style="top:139.7px;font-family:'Liberation Sans', sans-serif;font-size:29px;line-height:29px;color:#000;letter-spacing:0.63px;left:1069.3px;">TestMethodOrder.java</div>
<svg style="left:1385px;top:145px" width="19" height="19" viewBox="0 0 19 19"><path d="M1,1 L18,18 M18,1 L1,18" stroke="#a9a9a9" stroke-width="2.2"/></svg>
<svg style="left:1444.5px;top:137px" width="38" height="36" viewBox="0 0 38 36"><circle cx="17.5" cy="17.5" r="17.5" fill="#5ec2e6"/><path d="M22.8,13.2 A7.0,7.0 0 1 0 22.8,21.8" fill="none" stroke="#333" stroke-width="2.5"/></svg>
<div class="t" style="top:139.7px;font-family:'Liberation Sans', sans-serif;font-size:29px;line-height:29px;color:#000;letter-spacing:0.31px;left:1491px;">Calculator.java</div>
<svg style="left:1705px;top:145px" width="19" height="19" viewBox="0 0 19 19"><path d="M1,1 L18,18 M18,1 L1,18" stroke="#a9a9a9" stroke-width="2.2"/></svg>
<svg style="left:1764.7px;top:137px" width="38" height="36" viewBox="0 0 38 36"><circle cx="17.5" cy="17.5" r="17.5" fill="#5ec2e6"/><path d="M22.8,13.2 A7.0,7.0 0 1 0 22.8,21.8" fill="none" stroke="#333" stroke-width="2.5"/><polygon points="20.0,10.0 27.0,3.0 27.0,15.0" fill="#e8383d"/><polygon points="29.0,3.0 36.0,8.0 29.0,14.0" fill="#3b9c48"/></svg>
<div class="t" style="top:139.7px;font-family:'Liberation Sans', sans-serif;font-size:29px;line-height:29px;color:#000;letter-spacing:0.50px;left:1811.3px;">CalculatorTest.java</div>
<svg style="left:2085px;top:145px" width="19" height="19" viewBox="0 0 19 19"><path d="M1,1 L18,18 M18,1 L1,18" stroke="#a9a9a9" stroke-width="2.2"/></svg>
<svg style="left:2143px;top:145px" width="30" height="20" viewBox="0 0 30 20"><polyline points="2,2 15,15 28,2" fill="none" stroke="#646464" stroke-width="4"/></svg>
<div style="left:948px;top:189px;width:167px;height:1068px;background:#ececec;"></div>
<div style="left:1115px;top:189px;width:2px;height:1068px;background:#d0d0d0;"></div>
<div style="left:1117px;top:189px;width:1073px;height:1068px;background:#ffffff;"></div>
<div style="left:948px;top:1257px;width:1242px;height:2px;background:#c9c9c9;"></div>
<div style="left:948px;top:1018.8px;width:167px;height:56px;background:#fdf5d8;"></div>
<div style="left:1117px;top:1018.8px;width:1073px;height:56px;background:#fffae3;"></div>
<div style="left:1272.5px;top:234.8px;width:60.0px;height:55px;background:#e4f5e3;"></div>
<div style="left:1732.5px;top:458.8px;width:60.0px;height:55px;background:#f6e7b4;"></div>
<div style="left:2012.0px;top:906.8px;width:20.0px;height:55px;background:#5cc2e4;"></div>
<div style="left:1212.5px;top:1018.8px;width:20.0px;height:55px;background:#5cc2e4;"></div>
<div style="left:1232.0px;top:1026.8px;width:5px;height:41px;background:#000;"></div>
<div style="left:1216px;top:682.8px;width:2px;height:56px;background:#e3e3e3;"></div>
<div style="left:1216px;top:962.8px;width:2px;height:56px;background:#e3e3e3;"></div>
<div style="left:1092px;top:906.8px;width:2px;height:168px;background:#3b4b8a;"></div>
<div class="t" style="top:191.8px;font-family:'Liberation Mono', monospace;font-size:33.33px;line-height:33.33px;color:#8e8e8e;letter-spacing:-1.00px;left:976.0px;">2</div>
<div class="t" style="top:247.8px;font-family:'Liberation Mono', monospace;font-size:33.33px;line-height:33.33px;color:#8e8e8e;letter-spacing:-1.00px;left:976.0px;">3</div>
<div class="t" style="top:303.8px;font-family:'Liberation Mono', monospace;font-size:33.33px;line-height:33.33px;color:#8e8e8e;letter-spacing:-1.00px;left:976.0px;">9</div>
<div class="t" style="top:359.8px;font-family:'Liberation Mono', monospace;font-size:33.33px;line-height:33.33px;color:#8e8e8e;letter-spacing:-1.00px;left:957.0px;">10</div>
<div class="t" style="top:415.8px;font-family:'Liberation Mono', monospace;font-size:33.33px;line-height:33.33px;color:#8e8e8e;letter-spacing:-1.00px;left:957.0px;">11</div>
<div class="t" style="top:471.8px;font-family:'Liberation Mono', monospace;font-size:33.33px;line-height:33.33px;color:#8e8e8e;letter-spacing:-1.00px;left:957.0px;">12</div>
<div class="t" style="top:527.8px;font-family:'Liberation Mono', monospace;font-size:33.33px;line-height:33.33px;color:#8e8e8e;letter-spacing:-1.00px;left:957.0px;">13</div>
<div class="t" style="top:583.8px;font-family:'Liberation Mono', monospace;font-size:33.33px;line-height:33.33px;color:#8e8e8e;letter-spacing:-1.00px;left:957.0px;">14</div>
<div class="t" style="top:639.8px;font-family:'Liberation Mono', monospace;font-size:33.33px;line-height:33.33px;color:#8e8e8e;letter-spacing:-1.00px;left:957.0px;">15</div>
<div class="t" style="top:695.8px;font-family:'Liberation Mono', monospace;font-size:33.33px;line-height:33.33px;color:#8e8e8e;letter-spacing:-1.00px;left:957.0px;">16</div>
<div class="t" style="top:751.8px;font-family:'Liberation Mono', monospace;font-size:33.33px;line-height:33.33px;color:#8e8e8e;letter-spacing:-1.00px;left:957.0px;">17</div>
<div class="t" style="top:807.8px;font-family:'Liberation Mono', monospace;font-size:33.33px;line-height:33.33px;color:#8e8e8e;letter-spacing:-1.00px;left:957.0px;">18</div>
<div class="t" style="top:863.8px;font-family:'Liberation Mono', monospace;font-size:33.33px;line-height:33.33px;color:#8e8e8e;letter-spacing:-1.00px;left:957.0px;">19</div>
<div class="t" style="top:919.8px;font-family:'Liberation Mono', monospace;font-size:33.33px;line-height:33.33px;color:#8e8e8e;letter-spacing:-1.00px;left:957.0px;">20</div>
<div class="t" style="top:975.8px;font-family:'Liberation Mono', monospace;font-size:33.33px;line-height:33.33px;color:#8e8e8e;letter-spacing:-1.00px;left:957.0px;">21</div>
<div class="t" style="top:1031.8px;font-family:'Liberation Mono', monospace;font-size:33.33px;line-height:33.33px;color:#8e8e8e;letter-spacing:-1.00px;left:957.0px;">22</div>
<div class="t" style="top:1087.8px;font-family:'Liberation Mono', monospace;font-size:33.33px;line-height:33.33px;color:#8e8e8e;letter-spacing:-1.00px;left:957.0px;">23</div>
<div class="t" style="top:1143.8px;font-family:'Liberation Mono', monospace;font-size:33.33px;line-height:33.33px;color:#8e8e8e;letter-spacing:-1.00px;left:957.0px;">24</div>
<div class="t" style="top:1199.8px;font-family:'Liberation Mono', monospace;font-size:33.33px;line-height:33.33px;color:#8e8e8e;letter-spacing:-1.00px;left:957.0px;">25</div>
<div class="t" style="left:1132.5px;top:247.8px;font-family:'Liberation Mono', monospace;font-size:33.33px;line-height:33.33px;letter-spacing:0px"><span style="color:#000080;font-weight:700;">import</span><span style="color:#000;"> </span><span style="color:#555;">...</span></div>
<div class="t" style="left:1132.5px;top:359.8px;font-family:'Liberation Mono', monospace;font-size:33.33px;line-height:33.33px;letter-spacing:0px"><span style="color:#000080;font-weight:700;">public</span><span style="color:#000;"> </span><span style="color:#000080;font-weight:700;">class</span><span style="color:#000;"> CalculatorTest {</span></div>
<div class="t" style="left:1132.5px;top:471.8px;font-family:'Liberation Mono', monospace;font-size:33.33px;line-height:33.33px;letter-spacing:0px"><span style="color:#000;">    </span><span style="color:#000080;font-weight:700;">private</span><span style="color:#000;"> </span><span style="color:#000080;font-weight:700;">static</span><span style="color:#000;"> Calculator </span><span style="color:#2e0f7c;font-style:italic;">cal</span><span style="color:#000;">=</span><span style="color:#000080;font-weight:700;">new</span><span style="color:#000;"> Calculator();</span></div>
<div class="t" style="left:1132.5px;top:583.8px;font-family:'Liberation Mono', monospace;font-size:33.33px;line-height:33.33px;letter-spacing:0px"><span style="color:#808000;">    @Before</span></div>
<div class="t" style="left:1132.5px;top:639.8px;font-family:'Liberation Mono', monospace;font-size:33.33px;line-height:33.33px;letter-spacing:0px"><span style="color:#000;">    </span><span style="color:#000080;font-weight:700;">public</span><span style="color:#000;"> </span><span style="color:#000080;font-weight:700;">void</span><span style="color:#000;"> setUp() </span><span style="color:#000080;font-weight:700;">throws</span><span style="color:#000;"> </span><span style="color:#808080;">Exception</span><span style="color:#000;"> {</span></div>
<div class="t" style="left:1132.5px;top:695.8px;font-family:'Liberation Mono', monospace;font-size:33.33px;line-height:33.33px;letter-spacing:0px"><span style="color:#000;">        System.</span><span style="color:#2e0f7c;font-weight:700;font-style:italic;">out</span><span style="color:#000;">.println(</span><span style="color:#008000;font-weight:700;">&quot;before&quot;</span><span style="color:#000;">);</span></div>
<div class="t" style="left:1132.5px;top:751.8px;font-family:'Liberation Mono', monospace;font-size:33.33px;line-height:33.33px;letter-spacing:0px"><span style="color:#000;">    }</span></div>
<div class="t" style="left:1132.5px;top:863.8px;font-family:'Liberation Mono', monospace;font-size:33.33px;line-height:33.33px;letter-spacing:0px"><span style="color:#808000;">    @After</span></div>
<div class="t" style="left:1132.5px;top:919.8px;font-family:'Liberation Mono', monospace;font-size:33.33px;line-height:33.33px;letter-spacing:0px"><span style="color:#000;">    </span><span style="color:#000080;font-weight:700;">public</span><span style="color:#000;"> </span><span style="color:#000080;font-weight:700;">void</span><span style="color:#000;"> tearDown() </span><span style="color:#000080;font-weight:700;">throws</span><span style="color:#000;"> </span><span style="color:#808080;">Exception</span><span style="color:#000;"> {</span></div>
<div class="t" style="left:1132.5px;top:975.8px;font-family:'Liberation Mono', monospace;font-size:33.33px;line-height:33.33px;letter-spacing:0px"><span style="color:#000;">        System.</span><span style="color:#2e0f7c;font-weight:700;font-style:italic;">out</span><span style="color:#000;">.println(</span><span style="color:#008000;font-weight:700;">&quot;after&quot;</span><span style="color:#000;">);</span></div>
<div class="t" style="left:1132.5px;top:1031.8px;font-family:'Liberation Mono', monospace;font-size:33.33px;line-height:33.33px;letter-spacing:0px"><span style="color:#000;">    }</span></div>
<div class="t" style="left:1132.5px;top:1143.8px;font-family:'Liberation Mono', monospace;font-size:33.33px;line-height:33.33px;letter-spacing:0px"><span style="color:#808000;">    @Test</span></div>
<div class="t" style="left:1132.5px;top:1199.8px;font-family:'Liberation Mono', monospace;font-size:33.33px;line-height:33.33px;letter-spacing:0px"><span style="color:#000;">    </span><span style="color:#000080;font-weight:700;">public</span><span style="color:#000;"> </span><span style="color:#000080;font-weight:700;">void</span><span style="color:#000;"> add() {</span></div>
<svg style="left:1105px;top:251px" width="24" height="24" viewBox="0 0 24 24"><rect x="1" y="1" width="21" height="21" fill="#fff" stroke="#c4c4c4" stroke-width="2"/><path d="M5,11.5 L18,11.5 M11.5,5 L11.5,18" stroke="#b4b4b4" stroke-width="1.6"/></svg>
<svg style="left:1105px;top:643.3px" width="24" height="28" viewBox="0 0 24 28"><path d="M1,1 L22,1 L22,18 L11.5,26.5 L1,18 Z" fill="#fff" stroke="#c4c4c4" stroke-width="2"/><path d="M5.5,11 L17.5,11" stroke="#b4b4b4" stroke-width="1.8"/></svg>
<svg style="left:1105px;top:747.3px" width="24" height="30" viewBox="0 0 24 30"><path d="M1,29 L22,29 L22,13 L11.5,2 L1,13 Z" fill="#fff" stroke="#c4c4c4" stroke-width="2"/><path d="M6,19 L17,19" stroke="#b4b4b4" stroke-width="1.6"/></svg>
<svg style="left:1105px;top:923.3px" width="24" height="28" viewBox="0 0 24 28"><path d="M1,1 L22,1 L22,18 L11.5,26.5 L1,18 Z" fill="#fff" stroke="#c4c4c4" stroke-width="2"/><path d="M5.5,11 L17.5,11" stroke="#b4b4b4" stroke-width="1.8"/></svg>
<svg style="left:1105px;top:1027.3px" width="24" height="30" viewBox="0 0 24 30"><path d="M1,29 L22,29 L22,13 L11.5,2 L1,13 Z" fill="#fff" stroke="#c4c4c4" stroke-width="2"/><path d="M6,19 L17,19" stroke="#b4b4b4" stroke-width="1.6"/></svg>
<svg style="left:1105px;top:1203.3px" width="24" height="28" viewBox="0 0 24 28"><path d="M1,1 L22,1 L22,18 L11.5,26.5 L1,18 Z" fill="#fff" stroke="#c4c4c4" stroke-width="2"/><path d="M5.5,11 L17.5,11" stroke="#b4b4b4" stroke-width="1.8"/></svg>
<svg style="left:1026px;top:352px" width="36" height="36" viewBox="0 0 36 36"><circle cx="15.3" cy="16.3" r="11.3" fill="#e5353f"/><rect x="19.1" y="15.2" width="16" height="20" fill="#ececec"/><rect x="13" y="9" width="4.2" height="7.3" fill="#ececec"/><rect x="13" y="19.8" width="4.2" height="4.1" fill="#ececec"/><polygon points="21.3,18 33.5,26.1 21.3,34.8" fill="#2f9f48"/></svg>
<svg style="left:1026px;top:1192px" width="36" height="36" viewBox="0 0 36 36"><circle cx="15" cy="16" r="11.2" fill="#2f9f48"/><rect x="19.1" y="14.8" width="16" height="20" fill="#ececec"/><polyline points="7.7,15.7 12.6,21 20.7,12.2" fill="none" stroke="#ececec" stroke-width="3.6"/><polygon points="21.3,17.9 33.5,26 21.3,34.7" fill="#2f9f48"/></svg>
<div style="left:2160px;top:195px;width:26px;height:26px;background:#f5a90d;"></div>
<div style="left:2160px;top:259px;width:22px;height:348px;background:#bdbdbd;border-radius:11px"></div>
<div style="left:2154px;top:347px;width:36px;height:5px;background:#f2a60a;"></div>
<div style="left:2154px;top:406px;width:36px;height:5px;background:#f2a60a;"></div>
<div style="left:2154px;top:501px;width:36px;height:5px;background:#f2a60a;"></div>
<div style="left:2154px;top:831px;width:36px;height:5px;background:#f2a60a;"></div>
<div style="left:2154px;top:929px;width:36px;height:5px;background:#f2a60a;"></div>
<div style="left:2154px;top:949px;width:36px;height:5px;background:#f2a60a;"></div>
<div style="left:1132px;top:1221px;width:1058px;height:36px;background:#f4f4f4;"></div>
<div style="left:1138px;top:1227px;width:1024px;height:24px;background:#b8b8b8;border-radius:12px"></div>
<div style="left:2190px;top:121px;width:2px;height:1137px;background:#c9c9c9;"></div>
<div style="left:2192px;top:121px;width:1340px;height:66px;background:#efefef;"></div>
<div style="left:2192px;top:187px;width:1340px;height:2px;background:#c9c9c9;"></div>
<div class="t" style="top:141.9px;font-family:'Liberation Sans', sans-serif;font-size:29px;line-height:29px;color:#000;letter-spacing:0.23px;left:2207px;">Coverage:</div>
<div class="t" style="top:142.2px;font-family:'Liberation Sans', sans-serif;font-size:29px;line-height:29px;color:#000;letter-spacing:0.91px;left:2393px;">CalculatorTest</div>
<svg style="left:2609px;top:148px" width="19" height="19" viewBox="0 0 19 19"><path d="M1,1 L18,18 M18,1 L1,18" stroke="#a9a9a9" stroke-width="2.2"/></svg>
<div style="left:2365px;top:183px;width:291px;height:5px;background:#9aa3ad;"></div>
<svg style="left:3414px;top:139px" width="32" height="32" viewBox="0 0 32 32"><polygon points="14.9,4.5 17.6,0.1 20.6,0.7 21.4,5.8 23.3,7.1 28.4,5.8 30.1,8.5 27.0,12.7 27.5,14.9 31.9,17.6 31.3,20.6 26.2,21.4 24.9,23.3 26.2,28.4 23.5,30.1 19.3,27.0 17.1,27.5 14.4,31.9 11.4,31.3 10.6,26.2 8.7,24.9 3.6,26.2 1.9,23.5 5.0,19.3 4.5,17.1 0.1,14.4 0.7,11.4 5.8,10.6 7.1,8.7 5.8,3.6 8.5,1.9 12.7,5.0" fill="#646464"/><circle cx="16.0" cy="16.0" r="5.4" fill="#efefef"/></svg>
<div style="left:3483px;top:152px;width:30px;height:5px;background:#646464;"></div>
<div style="left:2192px;top:189px;width:72px;height:1069px;background:#efefef;"></div>
<svg style="left:2211px;top:210px" width="34" height="38" viewBox="0 0 34 38"><polygon points="17,1 33,17 23,17 23,36 11,36 11,17 1,17" fill="#b3b3b3"/></svg>
<svg style="left:2211px;top:278px" width="34" height="38" viewBox="0 0 34 38"><g fill="#646464"><rect x="1" y="2" width="3" height="36"/><rect x="3" y="13" width="8" height="3"/><rect x="3" y="30" width="8" height="3"/><path d="M10,4 L18,4 L20,7 L28,7 L28,19 L10,19 Z"/><path d="M10,21 L18,21 L20,24 L28,24 L28,36 L10,36 Z"/></g></svg>
<svg style="left:2211px;top:347px" width="34" height="38" viewBox="0 0 34 38"><g fill="#646464"><path d="M1,10 L1,2 L33,2 L33,10 L30,10 L30,5 L4,5 L4,10 Z"/><polygon points="17,9 28,20 21,20 21,37 13,37 13,20 6,20"/></g></svg>
<svg style="left:2211px;top:414px" width="34" height="38" viewBox="0 0 34 38"><g fill="#646464"><path d="M1,10 L1,2 L33,2 L33,10 L30,10 L30,5 L4,5 L4,10 Z"/><polygon points="17,37 28,26 21,26 21,9 13,9 13,26 6,26"/></g></svg>
<svg style="left:2211px;top:482px" width="36" height="38" viewBox="0 0 36 38"><g fill="#646464"><path d="M1,10 L1,36 L27,36 L27,31 L6,31 L6,10 Z"/><polygon points="33,2 33,17 28,12 15,25 11,21 24,8 19,3"/></g></svg>
<div style="left:2264px;top:189px;width:1268px;height:51px;background:#efefef;"></div>
<div class="t" style="top:200.0px;font-family:'Liberation Sans', sans-serif;font-size:29px;line-height:29px;color:#000;letter-spacing:1.67px;left:2264px;">100% classes, 63% lines covered in &#x27;all classes in scope&#x27;</div>
<div style="left:2264px;top:240px;width:1268px;height:1018px;background:#c9c9c9;"></div>
<div style="left:2266px;top:242px;width:1264px;height:1014px;background:#ffffff;"></div>
<div class="t" style="top:257.9px;font-family:'Liberation Sans', sans-serif;font-size:29px;line-height:29px;color:#000;letter-spacing:1.32px;left:2287.3px;">Element</div>
<div style="left:2822px;top:244px;width:2px;height:54px;background:#d0d0d0;"></div>
<div style="left:2998px;top:244px;width:2px;height:54px;background:#d0d0d0;"></div>
<div style="left:3174px;top:244px;width:2px;height:54px;background:#d0d0d0;"></div>
<div style="left:3352px;top:244px;width:2px;height:54px;background:#d0d0d0;"></div>
<div class="t" style="top:257.9px;font-family:'Liberation Sans', sans-serif;font-size:29px;line-height:29px;color:#000;letter-spacing:1.08px;left:2845px;">Class, %</div>
<div class="t" style="top:257.9px;font-family:'Liberation Sans', sans-serif;font-size:29px;line-height:29px;color:#000;letter-spacing:1.76px;left:3020.8px;">Method, %</div>
<div class="t" style="top:257.9px;font-family:'Liberation Sans', sans-serif;font-size:29px;line-height:29px;color:#000;letter-spacing:1.15px;left:3197.4px;">Line, %</div>
<div class="t" style="top:257.9px;font-family:'Liberation Sans', sans-serif;font-size:29px;line-height:29px;color:#000;letter-spacing:1.36px;left:3375.3px;">Branch, %</div>
<div style="left:2266px;top:303px;width:556px;height:46px;background:#0b5fc0;"></div>
<div style="left:2824px;top:303px;width:174px;height:46px;background:#0b5fc0;"></div>
<div style="left:3000px;top:303px;width:174px;height:46px;background:#0b5fc0;"></div>
<div style="left:3176px;top:303px;width:176px;height:46px;background:#0b5fc0;"></div>
<div style="left:3354px;top:303px;width:174px;height:46px;background:#0b5fc0;"></div>
<svg style="left:2274px;top:310px" width="36" height="28" viewBox="0 0 36 28"><path d="M0,0 L13,0 L16,5 L36,5 L36,27 L0,27 Z" fill="#8592a0"/><circle cx="12" cy="17" r="5" fill="#0b5fc0"/></svg>
<div class="t" style="top:311.7px;font-family:'Liberation Sans', sans-serif;font-size:29px;line-height:29px;color:#fff;letter-spacing:1.94px;left:2320.9px;">tech.pdai.junit4.module</div>
<div class="t" style="top:311.7px;font-family:'Liberation Sans', sans-serif;font-size:29px;line-height:29px;color:#fff;letter-spacing:2.46px;left:2829px;">100% (1/1)</div>
<div class="t" style="top:311.7px;font-family:'Liberation Sans', sans-serif;font-size:29px;line-height:29px;color:#fff;letter-spacing:2.24px;left:3006px;">60% (3/5)</div>
<div class="t" style="top:311.7px;font-family:'Liberation Sans', sans-serif;font-size:29px;line-height:29px;color:#fff;letter-spacing:1.21px;left:3182.8px;">63% (7/11)</div>
<div class="t" style="top:311.7px;font-family:'Liberation Sans', sans-serif;font-size:29px;line-height:29px;color:#fff;letter-spacing:1.88px;left:3359.9px;">100% (0/0)</div>
<div style="left:52px;top:1257px;width:3480px;height:2px;background:#c9c9c9;"></div>
<div style="left:52px;top:1259px;width:3480px;height:66px;background:#efefef;"></div>
<div style="left:52px;top:1325px;width:3480px;height:2px;background:#c9c9c9;"></div>
<div class="t" style="top:1279.9px;font-family:'Liberation Sans', sans-serif;font-size:29px;line-height:29px;color:#000;letter-spacing:-0.75px;left:67.6px;">Run:</div>
<svg style="left:178px;top:1279px" width="32" height="30" viewBox="0 0 32 30"><polygon points="13,1 13,29 1,15" fill="#f4a89a"/><polygon points="18,1 18,29 30,15" fill="#9fd49a"/></svg>
<div class="t" style="top:1279.9px;font-family:'Liberation Sans', sans-serif;font-size:29px;line-height:29px;color:#000;letter-spacing:0.94px;left:223px;">CalculatorTest</div>
<svg style="left:439px;top:1285px" width="19" height="19" viewBox="0 0 19 19"><path d="M1,1 L18,18 M18,1 L1,18" stroke="#a9a9a9" stroke-width="2.2"/></svg>
<div style="left:144px;top:1321px;width:342px;height:5px;background:#9aa3ad;"></div>
<svg style="left:3414px;top:1276px" width="32" height="32" viewBox="0 0 32 32"><polygon points="14.9,4.5 17.6,0.1 20.6,0.7 21.4,5.8 23.3,7.1 28.4,5.8 30.1,8.5 27.0,12.7 27.5,14.9 31.9,17.6 31.3,20.6 26.2,21.4 24.9,23.3 26.2,28.4 23.5,30.1 19.3,27.0 17.1,27.5 14.4,31.9 11.4,31.3 10.6,26.2 8.7,24.9 3.6,26.2 1.9,23.5 5.0,19.3 4.5,17.1 0.1,14.4 0.7,11.4 5.8,10.6 7.1,8.7 5.8,3.6 8.5,1.9 12.7,5.0" fill="#646464"/><circle cx="16.0" cy="16.0" r="5.4" fill="#efefef"/></svg>
<div style="left:3483px;top:1290px;width:30px;height:5px;background:#646464;"></div>
<div style="left:52px;top:1327px;width:71px;height:578px;background:#efefef;"></div>
<div style="left:123px;top:1327px;width:2px;height:578px;background:#c9c9c9;"></div>
<svg style="left:68px;top:1348px" width="42" height="40" viewBox="0 0 42 40"><g transform="scale(1.0)"><path d="M2.4,4.3 L15,2.2 L27.5,4.3 L27.5,11.6 L22.3,11.6 L22.3,8 L16,7 L16,26 L19.8,23.8 L19.8,27.5 L15.5,31.5 Q6,26.5 2.4,19 Z" fill="#5f5f5f"/><rect x="14.6" y="7" width="1.6" height="19.5" fill="#efefef"/><polygon points="22.3,14.7 39.6,25.7 22.3,36.8" fill="#389e46"/></g></svg>
<svg style="left:69px;top:1412px" width="42" height="42" viewBox="0 0 42 42"><circle cx="26" cy="15" r="14" fill="#e5353f"/><rect x="23" y="5" width="6" height="12" fill="#fff"/><rect x="23" y="19" width="6" height="5" fill="#fff"/><polygon points="1,12 20,24 1,36" fill="#389e46"/><polygon points="14,18 22,23 14,28" fill="#fff"/></svg>
<svg style="left:71px;top:1481px" width="34" height="40" viewBox="0 0 34 40"><g fill="none" stroke="#646464" stroke-width="3.5"><path d="M6,14 A12,12 0 0 1 28,12"/><path d="M28,26 A12,12 0 0 1 6,28"/></g><polygon points="2,8 10,8 6,16" fill="#646464"/><polygon points="32,32 24,32 28,24" fill="#646464"/><rect x="1" y="15" width="10" height="9" fill="none" stroke="#646464" stroke-width="2.5"/><rect x="23" y="15" width="10" height="9" fill="none" stroke="#646464" stroke-width="2.5"/></svg>
<div style="left:64px;top:1543px;width:46px;height:2px;background:#cccccc;"></div>
<div style="left:75px;top:1577px;width:25px;height:25px;background:#b0b0b0;"></div>
<svg style="left:69px;top:1640px" width="38" height="34" viewBox="0 0 38 34"><g fill="#b0b0b0"><rect x="1" y="8" width="36" height="25"/><rect x="10" y="1" width="17" height="9"/></g><circle cx="19" cy="19" r="7" fill="#efefef"/><circle cx="19" cy="19" r="4" fill="#b0b0b0"/></svg>
<svg style="left:71px;top:1706px" width="38" height="38" viewBox="0 0 38 38"><g fill="#b8b8b8"><ellipse cx="15" cy="19" rx="9" ry="11"/><rect x="1" y="12" width="28" height="3"/><rect x="1" y="20" width="28" height="3"/><path d="M8,2 L13,8 M22,2 L17,8" stroke="#b8b8b8" stroke-width="3"/><polygon points="36,22 36,37 21,37 26,32 20,26 24,22 30,28"/></g></svg>
<svg style="left:70px;top:1774px" width="38" height="38" viewBox="0 0 38 38"><g fill="#b8b8b8"><path d="M5,1 L35,1 L35,36 L5,36 L5,26 L9,26 L9,32 L31,32 L31,5 L9,5 L9,11 L5,11 Z"/><rect x="1" y="16" width="14" height="5"/><polygon points="14,10 23,18.5 14,27"/></g></svg>
<div style="left:64px;top:1835px;width:46px;height:2px;background:#cccccc;"></div>
<svg style="left:80px;top:1872px" width="22" height="16" viewBox="0 0 22 16"><path d="M2,2 L8,8 L2,14 M12,2 L18,8 L12,14" fill="none" stroke="#555" stroke-width="2"/></svg>
<div style="left:125px;top:1327px;width:1323px;height:72px;background:#efefef;"></div>
<div style="left:138px;top:1335px;width:56px;height:56px;background:#c7c7c7;border-radius:8px"></div>
<div style="left:206px;top:1335px;width:56px;height:56px;background:#c7c7c7;border-radius:8px"></div>
<svg style="left:150px;top:1350px" width="34" height="28" viewBox="0 0 34 28"><polyline points="3,14 12,23 31,4" fill="none" stroke="#646464" stroke-width="5"/></svg>
<svg style="left:218px;top:1346px" width="34" height="34" viewBox="0 0 34 34"><circle cx="17" cy="17" r="13.5" fill="none" stroke="#646464" stroke-width="4.5"/><line x1="8" y1="26" x2="26" y2="8" stroke="#646464" stroke-width="4.5"/></svg>
<div style="left:276px;top:1339px;width:2px;height:45px;background:#cfcfcf;"></div>
<svg style="left:303px;top:1346px" width="36" height="34" viewBox="0 0 36 34"><g fill="#646464"><rect x="8" y="2" width="4" height="22"/><polygon points="1,20 19,20 10,31"/></g><text x="20" y="15" font-family="Liberation Sans" font-size="15" font-weight="700" fill="#646464">a</text><text x="21" y="31" font-family="Liberation Sans" font-size="15" font-weight="700" fill="#646464">z</text></svg>
<svg style="left:371px;top:1346px" width="38" height="34" viewBox="0 0 38 34"><g fill="#646464"><rect x="8" y="2" width="4" height="22"/><polygon points="1,20 19,20 10,31"/><rect x="17" y="3" width="18" height="4"/><rect x="21" y="12" width="12" height="4"/><rect x="27" y="21" width="6" height="4"/></g></svg>
<div style="left:432px;top:1339px;width:2px;height:45px;background:#cfcfcf;"></div>
<svg style="left:462px;top:1344px" width="32" height="38" viewBox="0 0 32 38"><g fill="#646464"><rect x="1" y="1" width="30" height="4"/><polygon points="6,16 26,16 16,8"/><polygon points="6,21 26,21 16,29"/><rect x="1" y="33" width="30" height="4"/></g></svg>
<svg style="left:530px;top:1346px" width="32" height="34" viewBox="0 0 32 34"><g fill="#646464"><polygon points="6,1 26,1 16,10"/><rect x="1" y="15" width="30" height="4"/><polygon points="6,33 26,33 16,24"/></g></svg>
<div style="left:588px;top:1339px;width:2px;height:45px;background:#cfcfcf;"></div>
<svg style="left:621px;top:1347px" width="26" height="32" viewBox="0 0 26 32"><path d="M13,3 L13,31 M2,14 L13,3 L24,14" fill="none" stroke="#b8b8b8" stroke-width="3.5"/></svg>
<svg style="left:689px;top:1347px" width="26" height="32" viewBox="0 0 26 32"><path d="M13,1 L13,29 M2,18 L13,29 L24,18" fill="none" stroke="#646464" stroke-width="3.5"/></svg>
<svg style="left:752px;top:1345px" width="40" height="38" viewBox="0 0 40 38"><circle cx="17" cy="17" r="14.5" fill="none" stroke="#646464" stroke-width="3.5"/><path d="M17,9 L17,18 L23,22" fill="none" stroke="#646464" stroke-width="3"/><polygon points="25,31 37,31 31,37" fill="#333"/></svg>
<svg style="left:819px;top:1346px" width="34" height="34" viewBox="0 0 34 34"><g fill="#646464"><path d="M1,6 L6,6 L6,28 L28,28 L28,33 L1,33 Z"/><polygon points="11,11 11,24 24,24 19,19 31,7 27,3 15,15"/></g></svg>
<svg style="left:888px;top:1346px" width="34" height="34" viewBox="0 0 34 34"><g fill="#646464"><path d="M1,6 L6,6 L6,28 L28,28 L28,33 L1,33 Z" transform="translate(0,0)"/><polygon points="33,2 33,15 28,10 15,23 11,19 24,6 20,2"/></g></svg>
<svg style="left:957px;top:1346px" width="32" height="32" viewBox="0 0 32 32"><polygon points="14.9,4.5 17.6,0.1 20.6,0.7 21.4,5.8 23.3,7.1 28.4,5.8 30.1,8.5 27.0,12.7 27.5,14.9 31.9,17.6 31.3,20.6 26.2,21.4 24.9,23.3 26.2,28.4 23.5,30.1 19.3,27.0 17.1,27.5 14.4,31.9 11.4,31.3 10.6,26.2 8.7,24.9 3.6,26.2 1.9,23.5 5.0,19.3 4.5,17.1 0.1,14.4 0.7,11.4 5.8,10.6 7.1,8.7 5.8,3.6 8.5,1.9 12.7,5.0" fill="#646464"/><circle cx="16.0" cy="16.0" r="5.4" fill="#efefef"/></svg>
<svg style="left:978px;top:1371px" width="14" height="8" viewBox="0 0 14 8"><polygon points="0,0 13,0 6.5,7" fill="#333"/></svg>
<div style="left:125px;top:1399px;width:1323px;height:506px;background:#ffffff;"></div>
<div style="left:125px;top:1399px;width:1323px;height:51px;background:#cdcdcd;"></div>
<svg style="left:138px;top:1414px" width="24" height="20" viewBox="0 0 24 20"><polygon points="1,1 23,1 12,19" fill="#9ea1a6"/></svg>
<svg style="left:187px;top:1410px" width="34" height="34" viewBox="0 0 34 34"><circle cx="17" cy="17" r="16" fill="#e7616a"/><rect x="14.5" y="7" width="5" height="12" fill="#fff"/><rect x="14.5" y="22" width="5" height="5" fill="#fff"/></svg>
<div class="t" style="top:1410.0px;font-family:'Liberation Sans', sans-serif;font-size:31px;line-height:31px;color:#000;letter-spacing:1.03px;left:233px;">CalculatorTest</div>
<div class="t" style="top:1410.0px;font-family:'Liberation Sans', sans-serif;font-size:31px;line-height:31px;color:#787878;letter-spacing:0.98px;left:453px;">(tech.pdai.junit4.module)</div>
<div class="t" style="top:1411.7px;font-family:'Liberation Sans', sans-serif;font-size:29px;line-height:29px;color:#000;letter-spacing:-1.29px;left:1323.2px;">2 s 12 ms</div>
<svg style="left:233px;top:1466px" width="32" height="28" viewBox="0 0 32 28"><polyline points="3,13 11,21 29,3" fill="none" stroke="#4eb44e" stroke-width="6"/></svg>
<div class="t" style="top:1460.0px;font-family:'Liberation Sans', sans-serif;font-size:31px;line-height:31px;color:#000;letter-spacing:1.39px;left:278px;">subtract</div>
<div class="t" style="top:1461.7px;font-family:'Liberation Sans', sans-serif;font-size:29px;line-height:29px;color:#787878;letter-spacing:-1.75px;left:1381.0px;">2 ms</div>
<svg style="left:233px;top:1516px" width="32" height="28" viewBox="0 0 32 28"><polyline points="3,13 11,21 29,3" fill="none" stroke="#4eb44e" stroke-width="6"/></svg>
<div class="t" style="top:1510.0px;font-family:'Liberation Sans', sans-serif;font-size:31px;line-height:31px;color:#000;letter-spacing:0.87px;left:278px;">testDivideByZero</div>
<div class="t" style="top:1511.7px;font-family:'Liberation Sans', sans-serif;font-size:29px;line-height:29px;color:#787878;letter-spacing:-2.75px;left:1384.0px;">1 ms</div>
<svg style="left:232px;top:1559px" width="36" height="36" viewBox="0 0 36 36"><circle cx="17" cy="17" r="16" fill="#e7616a"/><rect x="14.5" y="7" width="5" height="12" fill="#fff"/><rect x="14.5" y="22" width="5" height="5" fill="#fff"/></svg>
<div class="t" style="top:1560.0px;font-family:'Liberation Sans', sans-serif;font-size:31px;line-height:31px;color:#000;letter-spacing:0.80px;left:278px;">divide</div>
<div class="t" style="top:1561.7px;font-family:'Liberation Sans', sans-serif;font-size:29px;line-height:29px;color:#787878;letter-spacing:-0.91px;left:1335.4px;">2 s 9 ms</div>
<svg style="left:233px;top:1616px" width="32" height="28" viewBox="0 0 32 28"><polyline points="3,13 11,21 29,3" fill="none" stroke="#4eb44e" stroke-width="6"/></svg>
<div class="t" style="top:1610.0px;font-family:'Liberation Sans', sans-serif;font-size:31px;line-height:31px;color:#000;letter-spacing:0.65px;left:278px;">add</div>
<div class="t" style="top:1611.7px;font-family:'Liberation Sans', sans-serif;font-size:29px;line-height:29px;color:#787878;letter-spacing:-1.65px;left:1380.7px;">0 ms</div>
<div style="left:1448px;top:1327px;width:2px;height:578px;background:#c9c9c9;"></div>
<div style="left:1450px;top:1327px;width:2082px;height:72px;background:#efefef;"></div>
<svg style="left:1460px;top:1340px" width="34" height="34" viewBox="0 0 34 34"><circle cx="16.5" cy="16.5" r="16" fill="#e5353f"/><rect x="14" y="6" width="5" height="13" fill="#fff"/><rect x="14" y="22" width="5" height="5" fill="#fff"/></svg>
<div class="t" style="top:1342.0px;font-family:'Liberation Sans', sans-serif;font-size:29px;line-height:29px;color:#c7141e;letter-spacing:1.55px;left:1505px;">Tests failed: 1</div>
<div class="t" style="top:1342.0px;font-family:'Liberation Sans', sans-serif;font-size:29px;line-height:29px;color:#000;letter-spacing:1.61px;left:1707px;">, passed: 3</div>
<div class="t" style="top:1342.0px;font-family:'Liberation Sans', sans-serif;font-size:29px;line-height:29px;color:#787878;letter-spacing:1.11px;left:1876px;">of 4 tests – 2 s 12 ms</div>
<div style="left:1450px;top:1399px;width:2009px;height:2px;background:#c9c9c9;"></div>
<div style="left:1450px;top:1401px;width:2009px;height:504px;background:#ffffff;"></div>
<div style="left:1482px;top:1401px;width:1540px;height:55px;background:#e4f8e2;"></div>
<div class="t" style="top:1415.5px;font-family:'Liberation Mono', monospace;font-size:33.33px;line-height:33.33px;color:#444;letter-spacing:0.00px;font-weight:700;left:1482px;">/Library/Java/JavaVirtualMachines/jdk1.8.0_181.jdk/Contents/Home/bin/java ...</div>
<div class="t" style="top:1471.5px;font-family:'Liberation Mono', monospace;font-size:33.33px;line-height:33.33px;color:#000;letter-spacing:0.00px;left:1482px;">before</div>
<div class="t" style="top:1527.5px;font-family:'Liberation Mono', monospace;font-size:33.33px;line-height:33.33px;color:#000;letter-spacing:0.00px;left:1482px;">after</div>
<div class="t" style="top:1583.5px;font-family:'Liberation Mono', monospace;font-size:33.33px;line-height:33.33px;color:#000;letter-spacing:0.00px;left:1482px;">before</div>
<div class="t" style="top:1639.5px;font-family:'Liberation Mono', monospace;font-size:33.33px;line-height:33.33px;color:#000;letter-spacing:0.00px;left:1482px;">after</div>
<div class="t" style="top:1695.5px;font-family:'Liberation Mono', monospace;font-size:33.33px;line-height:33.33px;color:#000;letter-spacing:0.00px;left:1482px;">before</div>
<div class="t" style="top:1751.5px;font-family:'Liberation Mono', monospace;font-size:33.33px;line-height:33.33px;color:#000;letter-spacing:0.00px;left:1482px;">after</div>
<div class="t" style="top:1863.5px;font-family:'Liberation Mono', monospace;font-size:33.33px;line-height:33.33px;color:#7a0b0b;letter-spacing:0.00px;left:1482px;">org.junit.runners.model.TestTimedOutException: test timed out after 2000 milliseconds</div>
<div style="left:3422px;top:1401px;width:37px;height:504px;background:#f4f4f4;"></div>
<div style="left:3428px;top:1407px;width:24px;height:240px;background:#b8b8b8;border-radius:12px"></div>
<div style="left:3459px;top:1399px;width:2px;height:506px;background:#c9c9c9;"></div>
<div style="left:3461px;top:1399px;width:71px;height:506px;background:#efefef;"></div>
<svg style="left:3483px;top:1420px" width="26" height="36" viewBox="0 0 26 36"><path d="M13,4 L13,34 M2,15 L13,4 L24,15" fill="none" stroke="#646464" stroke-width="3.5"/></svg>
<svg style="left:3483px;top:1489px" width="26" height="36" viewBox="0 0 26 36"><path d="M13,2 L13,32 M2,21 L13,32 L24,21" fill="none" stroke="#646464" stroke-width="3.5"/></svg>
<svg style="left:3479px;top:1559px" width="34" height="36" viewBox="0 0 34 36"><g fill="#646464"><rect x="1" y="2" width="30" height="4"/><rect x="1" y="13" width="20" height="4"/><rect x="1" y="26" width="5" height="4"/></g><path d="M12,28 L24,28 A6,6 0 0 0 24,15 L17,15" fill="none" stroke="#646464" stroke-width="3.5"/><polygon points="11,28 18,22 18,34" fill="#646464"/></svg>
<svg style="left:3479px;top:1622px" width="34" height="36" viewBox="0 0 34 36"><g fill="#646464"><rect x="1" y="8" width="10" height="4"/><rect x="1" y="17" width="10" height="4"/><rect x="1" y="28" width="30" height="4"/><rect x="20" y="2" width="4" height="14"/><polygon points="13,13 31,13 22,23"/></g></svg>
<svg style="left:3478px;top:1693px" width="36" height="36" viewBox="0 0 36 36"><g fill="#646464"><rect x="8" y="1" width="20" height="7"/><path d="M1,10 L35,10 L35,26 L29,26 L29,20 L7,20 L7,26 L1,26 Z"/><path d="M8,21 L28,21 L28,34 L8,34 Z M11,24 L11,31 L25,31 L25,24 Z"/></g></svg>
<svg style="left:3481px;top:1758px" width="30" height="38" viewBox="0 0 30 38"><g fill="#646464"><rect x="10" y="1" width="10" height="4"/><rect x="1" y="5" width="28" height="4"/><path d="M4,11 L26,11 L26,34 Q26,37 23,37 L7,37 Q4,37 4,34 Z"/></g></svg>
<div style="left:138px;top:1831px;width:421px;height:75px;background:#fdbcc0;border:2px solid #e49aa2;border-radius:8px;box-shadow:0 3px 8px rgba(0,0,0,0.18)"></div>
<svg style="left:330px;top:1905px" width="42" height="30" viewBox="0 0 42 30"><polygon points="0,0 41,0 20.5,27" fill="#fdbcc0"/><polyline points="2,0 20.5,26 39,0" fill="none" stroke="#e49aa2" stroke-width="2"/></svg>
<div style="left:333px;top:1903px;width:36px;height:4px;background:#fdbcc0;"></div>
<div class="t" style="top:1853.8px;font-family:'Liberation Sans', sans-serif;font-size:29px;line-height:29px;color:#000;letter-spacing:1.61px;left:169px;">Tests failed: 1, passed: 3</div>
<svg style="left:2600px;top:30px" width="440" height="270" viewBox="0 0 440 270"><rect x="358" y="11.5" width="63" height="79" rx="3" fill="none" stroke="#cf0a1c" stroke-width="8"/><line x1="354" y1="72" x2="36" y2="242" stroke="#cf0a1c" stroke-width="8"/><polygon points="12,255 38,224 53,252" fill="#cf0a1c"/></svg>
<svg style="left:0px;top:1995px" width="10" height="17" viewBox="0 0 10 17"><path d="M0,0 Q1.5,11 8,17 L0,17 Z" fill="#111"/></svg>
<svg style="left:3574px;top:1995px" width="10" height="17" viewBox="0 0 10 17"><path d="M10,0 Q8.5,11 2,17 L10,17 Z" fill="#4a0808"/></svg>
<svg style="left:0px;top:0px" width="4" height="12" viewBox="0 0 4 12"><path d="M0,0 L3.5,0 L0.5,11 L0,11 Z" fill="#7a0a0a"/></svg>
</body></html>
